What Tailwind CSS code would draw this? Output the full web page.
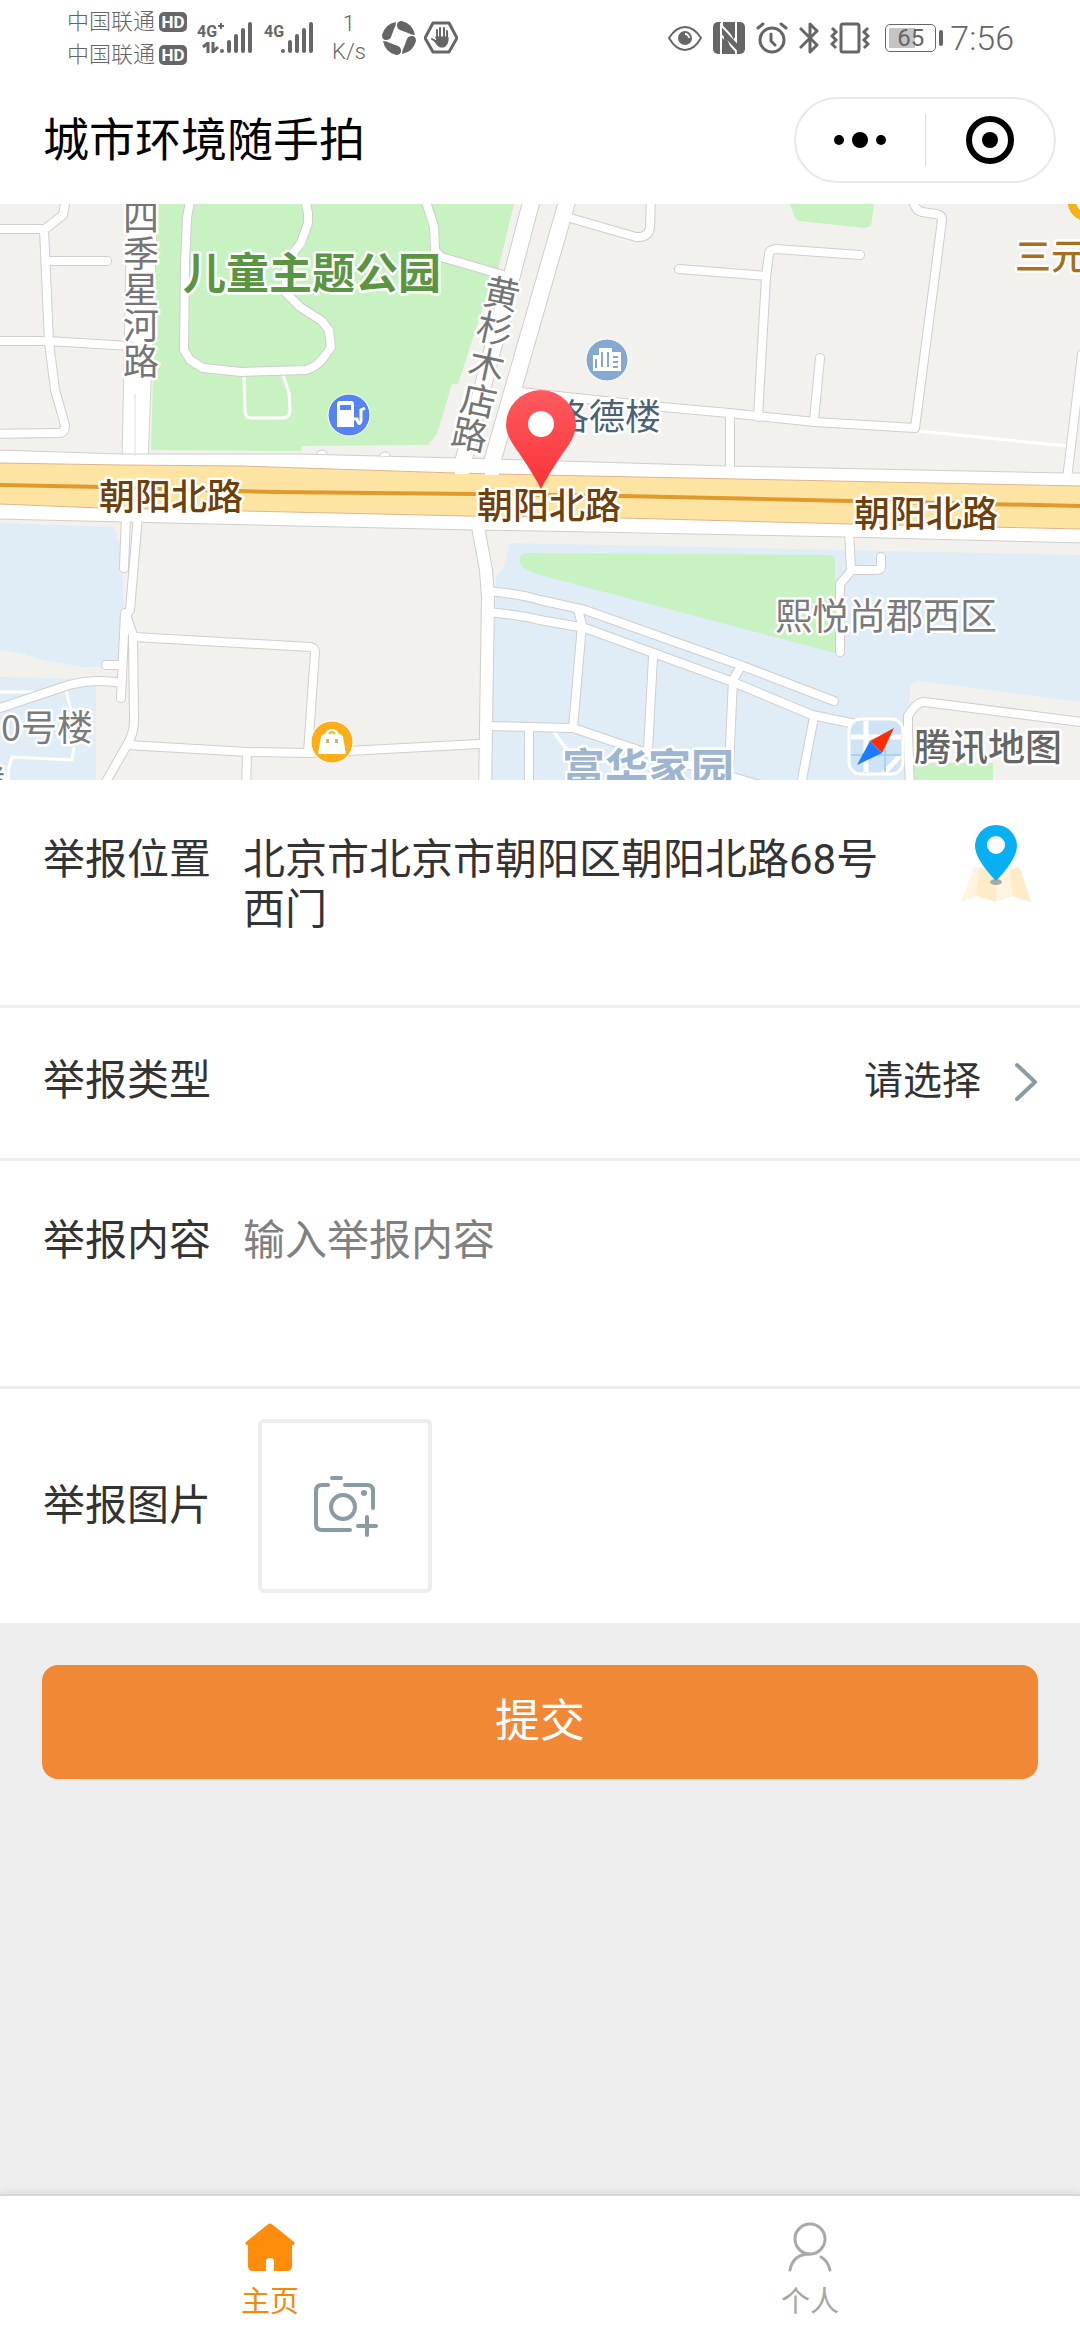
<!DOCTYPE html>
<html lang="zh-CN">
  <head>
    <meta charset="UTF-8" />
    <meta name="viewport" content="width=device-width, initial-scale=1.0" />

    <title>城市环境随手拍</title>

    <script src="https://cdn.jsdelivr.net/npm/@tailwindcss/browser@4"></script>
  </head>

  <body
    class="flex min-h-screen flex-col bg-[#eeeeee] font-[Roboto,'Noto_Sans_CJK_SC',sans-serif] text-[#333333]"
  >
    <!-- status bar -->
    <div class="flex h-[76px] items-center justify-between bg-white pr-[66px] pl-[67px] text-[#666666]">
      <div class="flex items-center">
        <div class="flex flex-col gap-[11px] text-[22px] leading-[22px] font-light">
          <div class="flex items-center gap-1">
            <span>中国联通</span>
            <span class="h-5 w-7 rounded-[5px] bg-[#666666] text-center text-[17px] leading-5 font-bold text-white">HD</span>
          </div>
          <div class="flex items-center gap-1">
            <span>中国联通</span>
            <span class="h-5 w-7 rounded-[5px] bg-[#666666] text-center text-[17px] leading-5 font-bold text-white">HD</span>
          </div>
        </div>
        <svg class="ml-[10px] h-8 w-[56px]" viewBox="0 0 56 32" fill="currentColor">
          <text x="0" y="15" font-size="16" font-weight="700">4G</text>
          <path d="M24 1v6M21 4h6" stroke="currentColor" stroke-width="2" />
          <path d="M11 20v11M11 21l-5 4M16 20v11M16 30l5-5" fill="none" stroke="currentColor" stroke-width="3" />
          <circle cx="25" cy="29" r="2" />
          <path d="M32 20v9M39 14v15M46 8v21M53 2v27" stroke="currentColor" stroke-width="4" stroke-linecap="round" />
        </svg>
        <svg class="ml-[11px] h-8 w-[50px]" viewBox="0 0 50 32" fill="currentColor">
          <text x="0" y="15" font-size="16" font-weight="700">4G</text>
          <circle cx="19" cy="29" r="2" />
          <path d="M26 20v9M33 14v15M40 8v21M47 2v27" stroke="currentColor" stroke-width="4" stroke-linecap="round" />
        </svg>
        <div class="ml-[18px] flex flex-col gap-1 text-center text-[22px] leading-6 font-light">
          <span>1</span>
          <span>K/s</span>
        </div>
        <svg class="ml-4 h-[34px] w-[34px]" viewBox="0 0 34 34" fill="currentColor">
          <path id="blade" d="M15 4Q15 0 20 0 31 3 33 14 29 14 26 12L18 9Q15 8 15 4z" />
          <use href="#blade" transform="rotate(90 17 17)" />
          <use href="#blade" transform="rotate(180 17 17)" />
          <use href="#blade" transform="rotate(270 17 17)" />
        </svg>
        <svg class="ml-2 h-[34px] w-[34px]" viewBox="0 0 34 34" fill="none" stroke="currentColor" stroke-linecap="round" stroke-linejoin="round">
          <path d="M9 2h16l8 15-8 14H9L1 17z" stroke-width="3" />
          <path d="M13 9v10M16 7v10M20 7v10M23 10v9M8 18l5 3" stroke-width="2" />
          <path d="M12 16h12v4q-1 5-4 6h-4q-3-1-6-7l3 1z" fill="currentColor" stroke-width="1" />
        </svg>
      </div>

      <div class="flex items-center gap-[11px]">
        <svg class="h-8 w-[34px]" viewBox="0 0 34 32" fill="none" stroke="currentColor" stroke-width="2">
          <path d="M1 16Q8 5 17 5t16 11Q26 28 17 28T1 16z" />
          <circle cx="17" cy="16" r="7" fill="currentColor" stroke="none" />
          <path d="M17 12a4 4 0 0 1 4 4" stroke="white" />
        </svg>
        <svg class="h-8 w-8" viewBox="0 0 32 32">
          <rect width="32" height="32" rx="5" fill="currentColor" />
          <path d="M8 32V3l15 16V0M9 0l0 5M23 32V29L8 13" fill="none" stroke="white" stroke-width="2" />
          <path d="M11 10v18l9 3zM12 1l9 2v15z" fill="currentColor" />
        </svg>
        <svg class="h-8 w-8" viewBox="0 0 32 32" fill="none" stroke="currentColor" stroke-width="3" stroke-linecap="round">
          <circle cx="16" cy="18" r="12" />
          <path d="M15 12v7l4 4M2 6l5-4M30 6l-5-4" />
        </svg>
        <svg class="h-8 w-5" viewBox="0 0 20 32" fill="none" stroke="currentColor" stroke-width="3" stroke-linejoin="round">
          <path d="M1 6l17 17-7 7V2l7 7L1 26" />
        </svg>
        <svg class="h-8 w-10" viewBox="0 0 40 32" fill="none" stroke="currentColor" stroke-width="3">
          <rect x="11" y="2" width="18" height="28" rx="2" />
          <path d="M2 6l4 4-4 4 4 4-4 4 4 4M38 6l-4 4 4 4-4 4 4 4-4 4" />
        </svg>
        <div class="ml-1 flex items-center gap-[3px]">
          <div class="flex h-7 w-[51px] rounded-[5px] border border-[#666666] bg-linear-to-r from-[#c4c4c4] from-60% to-white to-60% bg-clip-content p-[3px]">
            <span class="w-full text-center text-2xl leading-5">65</span>
          </div>
          <span class="h-4 w-1 rounded-sm bg-[#666666]"></span>
        </div>
        <span class="-ml-1 text-[34px] leading-10 font-light">7:56</span>
      </div>
    </div>

    <header class="flex h-32 items-center justify-between bg-white pr-6 pl-[43px]">
      <h1 class="text-[46px] leading-[60px] text-black">城市环境随手拍</h1>
      <div class="flex h-[86px] w-[262px] items-center rounded-full border-2 border-[#e8e8e8]">
        <button class="flex flex-1 justify-center" aria-label="更多">
          <svg class="h-5 w-[52px]" viewBox="0 0 52 20">
            <circle cx="5" cy="10" r="5" />
            <circle cx="26" cy="10" r="8" />
            <circle cx="47" cy="10" r="5" />
          </svg>
        </button>
        <span class="h-[52px] w-px bg-[#dddddd]"></span>
        <button class="flex flex-1 justify-center" aria-label="关闭">
          <svg class="h-12 w-12" viewBox="0 0 48 48">
            <circle cx="24" cy="24" r="21" fill="none" stroke="black" stroke-width="6" />
            <circle cx="24" cy="24" r="8" />
          </svg>
        </button>
      </div>
    </header>

    <!-- map -->
    <svg class="h-[576px] w-full" viewBox="0 0 1080 576" preserveAspectRatio="xMidYMid slice">
      <defs>
        <g id="streets" fill="none" stroke-linecap="round" stroke-linejoin="round">
          <path d="M65 0L63 11 45 25H-9M44 25L49 138 55 186 65 221Q65 229 59 229L-9 230M49 57H107M-9 137H48L130 142" />
          <path d="M191-9L187 14 185 60 184 146 190 156 203 164 241 168 306 166Q318 162 324 153L331 143 329 126 322 117 300 103 286 89V58L301 39 308 19V9L304-9" />
          <path d="M424-9L434 23 435 46 441 53 503 71" />
          <path d="M570 14L636 33Q648 34 650 24L651-9M679 65L766 72M860 51L776 45Q769 46 769 50L766 73 758 213M820 154L814 216" />
          <path d="M913-9Q913 6 922 8L936 10Q942 11 942 16L933 86 915 224 815 218 729 209 662 203 520 188M730 213V270M1082 150L1067 275" />
          <path d="M126 312L124 364M138 312L130 406 126 411 133 431 134 516Q134 530 127 541L103 583M125 409L121 494M106 461H121M121 479Q96 474 69 481L-9 507" />
          <path d="M134 433L310 443Q315 444 315 448L308 548M127 541L248 548 310 549 479 540M247 549L246 586" />
          <path d="M488 387Q520 390 540 396L585 406 740 461 834 497M488 408Q520 411 540 416L585 424 733 478 812 511 870 523" />
          <path d="M578 405L582 421 573 524M653 453L648 546M740 464L733 476 729 563M814 513L800 586M488 522L573 524 647 549 760 581M529 525V586" />
          <path d="M849 326L851 366H876Q881 366 881 362V353M851 367L840 380V448M1089 519L925 498Q917 497 908 512L908 529 910 586" />
        </g>
        <g id="avenues" fill="none">
          <path d="M533-9L462 262M569-9L491 262" stroke-linejoin="round" />
        </g>
        <path id="lane" d="M477 318L486 366 488 393 485 590" fill="none" />
      </defs>

      <rect width="1080" height="576" fill="#f3f1ee" />
      <path d="M158 0H514L498 66 482 106 458 180H452L437 230 428 241 302 242 301 247 151 246z" fill="#c8f2c2" />
      <path d="M790 0L795 14 799 17 865 24 871 22 874 0z" fill="#c8f2c2" />
      <path d="M0 319L114 323 121 343 124 409 117 463H83L41 456Q20 448 0 446zM0 473L96 475V576H0z" fill="#e0edf7" />
      <path d="M510 339L1080 351V498L920 477Q912 477 910 484L905 576H490L496 373 504 363z" fill="#e0edf7" />
      <path d="M910 486L1080 500V576H906z" fill="#f3f1ee" />
      <path d="M520 358Q518 349 529 349L830 351Q835 351 835 356V449L540 371Q521 366 520 358zM914 559H993V576H914z" fill="#c8f2c2" />

      <path d="M0 488L34 488M65 483L71 506M74 543L72 556 12 553 9 563 8 576M554 528L567 546M917 227L1067 242" fill="none" stroke="white" stroke-width="3" />
      <path d="M244 171L245 207Q245 214 251 214H282Q290 214 290 206L289 189 283 171" fill="none" stroke="white" stroke-width="3" />

      <path d="M127-2H158L148 260H122z" fill="white" stroke="#d3d1cf" />
      <use href="#streets" stroke="#d0cecc" stroke-width="10" />
      <use href="#avenues" stroke="#d0cecc" stroke-width="18" />
      <use href="#lane" stroke="#d0cecc" stroke-width="14" />
      <path d="M-2 246L122 250 300 250 458 254 561 257 728 262 1064 269 1082 269V339L845 333 540 327 472 326 124 318-2 315z" fill="white" stroke="#d0cecc" />
      <use href="#streets" stroke="white" stroke-width="8" />
      <use href="#avenues" stroke="white" stroke-width="16" />
      <use href="#lane" stroke="white" stroke-width="12" />
      <path d="M135 190V252" stroke="#dddddd" />
      <path d="M317 250a5 4 0 0 1 10 0M380 252a5 4 0 0 1 10 0" fill="white" stroke="#d0cecc" />

      <path d="M0 259L121 261 241 262 455 269 540 271 1080 282V325L850 320 623 314 468 312 244 307 100 304 0 300z" fill="#fee4a3" />
      <path d="M0 259L121 261 241 262 455 269 540 271 1080 282M0 300L100 304 244 307 468 312 623 314 850 320 1080 325" fill="none" stroke="#dfb48c" />
      <path d="M0 281L103 283 275 288 475 290 623 292 850 297 1080 302" fill="none" stroke="#e09a2b" stroke-width="4" />
      <path d="M462 264V270M492 265V271" stroke="white" stroke-width="14" />

      <!-- place markers -->
      <g stroke="white" stroke-width="1">
        <circle cx="349" cy="211" r="21" fill="#5584f0" />
        <circle cx="607" cy="156" r="21" fill="#84a9cf" />
        <circle cx="332" cy="538" r="21" fill="#fbae17" />
        <circle cx="1088" cy="-3" r="21" fill="#fbae17" />
      </g>
      <path d="M337 200Q337 197 340 197H351Q354 197 354 200V223H337zM340 201V206H351V201z" fill="white" fill-rule="evenodd" />
      <path d="M354 215H357Q359 223 361 217V206L365 204" fill="none" stroke="white" stroke-width="3" />
      <path d="M593 167V151H599V144H612V148H621V167z" fill="white" />
      <path d="M596 155V164M602 148V163M608 148V163M613 153H618M613 158H618M613 163H618" stroke="#84a9cf" stroke-width="2" />
      <path d="M318 550L321 533Q322 530 325 530 327 525 332 525T339 530Q342 530 343 533L346 550z" fill="white" />
      <path d="M329 530Q332 526 335 530" fill="none" stroke="#fbae17" stroke-width="2" />
      <path d="M326 537h3M335 537h3" stroke="#e0b060" stroke-width="4" />
      <circle cx="1088" cy="-3" r="12" fill="white" />

      <!-- labels -->
      <g font-family="Noto Sans CJK SC, sans-serif" font-size="36" font-weight="500" stroke="white" stroke-width="5" stroke-linejoin="round" paint-order="stroke">
        <g fill="#70400a">
          <text x="99" y="306">朝阳北路</text>
          <text x="477" y="315">朝阳北路</text>
          <text x="854" y="323">朝阳北路</text>
        </g>
        <g fill="#757575" font-weight="400" text-anchor="middle">
          <text x="141" y="27">四</text>
          <text x="141" y="63">季</text>
          <text x="141" y="99">星</text>
          <text x="141" y="135">河</text>
          <text x="141" y="171">路</text>
          <text x="0" y="14" transform="translate(502 89) rotate(12)">黄</text>
          <text x="0" y="14" transform="translate(495 124) rotate(12)">杉</text>
          <text x="0" y="14" transform="translate(487 160) rotate(12)">木</text>
          <text x="0" y="14" transform="translate(479 196) rotate(12)">店</text>
          <text x="0" y="14" transform="translate(470 230) rotate(12)">路</text>
        </g>
        <g fill="#7b7b7b" font-weight="400">
          <text x="1" y="537">0号楼</text>
          <text x="-30" y="593">楼</text>
          <text x="775" y="426" font-size="37">熙悦尚郡西区</text>
        </g>
        <text x="1015" y="66" fill="#a8701c">三元</text>
        <text x="553" y="226" fill="#4d6175" font-weight="400">洛德楼</text>
        <text x="183" y="85" font-size="43" font-weight="700" fill="#5a9541">儿童主题公园</text>
        <text x="562" y="581" font-size="43" font-weight="700" fill="#9db5cf">富华家园</text>
        <text x="914" y="557" font-size="37" fill="#666666">腾讯地图</text>
      </g>

      <!-- map provider logo -->
      <rect x="849" y="515" width="54" height="55" rx="12" fill="#cfe3f6" stroke="white" stroke-width="3" />
      <path d="M866 517V568M851 533H901M884 569L901 551" stroke="white" stroke-width="5" />
      <path d="M851 551H901M885 533V568" stroke="#a9d3ea" stroke-width="2" />
      <path d="M894 524L870 537 882 549z" fill="#ff2d00" />
      <path d="M857 561L870 537 882 549z" fill="#1a7cff" />

      <!-- current position -->
      <linearGradient id="pin" x2="0" y2="1">
        <stop stop-color="#ff5a5f" />
        <stop offset="1" stop-color="#f93437" />
      </linearGradient>
      <path d="M541 285Q534 271 519 249 506 232 506 221A35 35 0 0 1 576 221Q576 232 563 249 548 271 541 285z" fill="url(#pin)" />
      <circle cx="541" cy="220" r="13" fill="white" />
    </svg>

    <main class="flex-1">
      <form>
        <div class="bg-white text-[42px] leading-[50px]">
          <div class="flex items-start border-b-3 border-[#ededed] pt-[45px] pr-11 pb-[70px] pl-[43px]">
            <span class="w-[200px] shrink-0 pt-[10px]">举报位置</span>
            <p class="mr-12 flex-1 pt-[10px]">北京市北京市朝阳区朝阳北路68号西门</p>
            <button type="button" aria-label="重新定位">
              <svg class="h-20 w-20" viewBox="0 0 80 80">
                <path d="M18 42L5 77 21 71 25 42z" fill="#fff4e0" />
                <path d="M24 42L20 71 40 77V48z" fill="#ffebc8" />
                <path d="M40 48V77L57 71 53 42z" fill="#fff4e0" />
                <path d="M53 44L62 42Q64 42 65 46L75 77 57 71z" fill="#ffebc8" />
                <ellipse cx="40" cy="57" rx="6" ry="3" fill="#a9aaa2" />
                <path d="M40 56Q19 34 19 21A21 21 0 0 1 61 21Q61 34 40 56z" fill="#07aff3" />
                <circle cx="40" cy="20" r="9" fill="white" />
              </svg>
            </button>
          </div>

          <div class="flex h-[153px] items-center border-b-3 border-[#ededed] pr-[42px] pb-1 pl-[43px]">
            <label class="w-[200px] shrink-0" for="type">举报类型</label>
            <div class="flex flex-1 items-center justify-end gap-8">
              <select class="appearance-none bg-transparent text-[39px] leading-[50px]" id="type" name="type">
                <option>请选择</option>
              </select>
              <svg class="h-10 w-6" viewBox="0 0 24 40" fill="none" stroke="#8b9ba2" stroke-width="4" stroke-linecap="round" stroke-linejoin="round">
                <path d="M3 4L21 21 3 38" />
              </svg>
            </div>
          </div>

          <div class="flex items-start border-b-3 border-[#ededed] pt-[55px] pr-11 pl-[43px]">
            <label class="w-[200px] shrink-0" for="content">举报内容</label>
            <textarea
              class="h-[170px] flex-1 resize-none placeholder-[#808080]"
              id="content"
              name="content"
              placeholder="输入举报内容"
            ></textarea>
          </div>

          <div class="flex items-center py-[30px] pl-[43px]">
            <span class="w-[215px]">举报图片</span>
            <button
              class="flex h-[174px] w-[174px] items-center justify-center rounded-md border-4 border-[#ededed]"
              type="button"
              aria-label="添加图片"
            >
              <svg class="h-16 w-[66px]" viewBox="0 0 66 64" fill="none" stroke="#8b9ba2" stroke-width="4" stroke-linecap="round">
                <path d="M20 4H29M16 11H10Q4 11 4 17V50Q4 56 10 56H38M33 11H55Q61 11 61 17V34" />
                <circle cx="31" cy="33" r="12" />
                <circle cx="52" cy="19" r="3" fill="#8b9ba2" stroke="none" />
                <path d="M46 52H64M55 43V61" />
              </svg>
            </button>
          </div>
        </div>

        <div class="px-[42px] pt-[42px]">
          <button class="h-[114px] w-full rounded-2xl bg-[#f18835] text-[45px] text-white" type="submit">提交</button>
        </div>
      </form>
    </main>

    <nav class="flex h-[146px] border-t-2 border-[#d8d8d8] bg-white text-[29px] leading-9 shadow-[0_-2px_8px_rgba(0,0,0,0.08)]">
      <a class="flex flex-1 flex-col items-center gap-3 pt-[26px] text-[#f08a0c]" href="#home">
        <svg class="h-[50px] w-[50px]" viewBox="0 0 50 50" fill="#ff8c0a">
          <path d="M22 3Q25 0 28 3L49 20Q51 23 47 23V44Q47 49 42 49H29V39Q29 36 25 36T21 39V49H8Q3 49 3 44V23Q-1 23 1 20z" />
        </svg>
        主页
      </a>
      <a class="flex flex-1 flex-col items-center gap-3 pt-[26px] text-[#a6a6a6]" href="#me">
        <svg class="h-[50px] w-[50px]" viewBox="0 0 50 50" fill="none" stroke="#a9a9a9" stroke-width="3" stroke-linecap="round">
          <ellipse cx="25" cy="17" rx="15" ry="15" />
          <path d="M25 32Q8 32 5 48M36 35Q43 39 45 48" />
        </svg>
        个人
      </a>
    </nav>
  </body>
</html>
